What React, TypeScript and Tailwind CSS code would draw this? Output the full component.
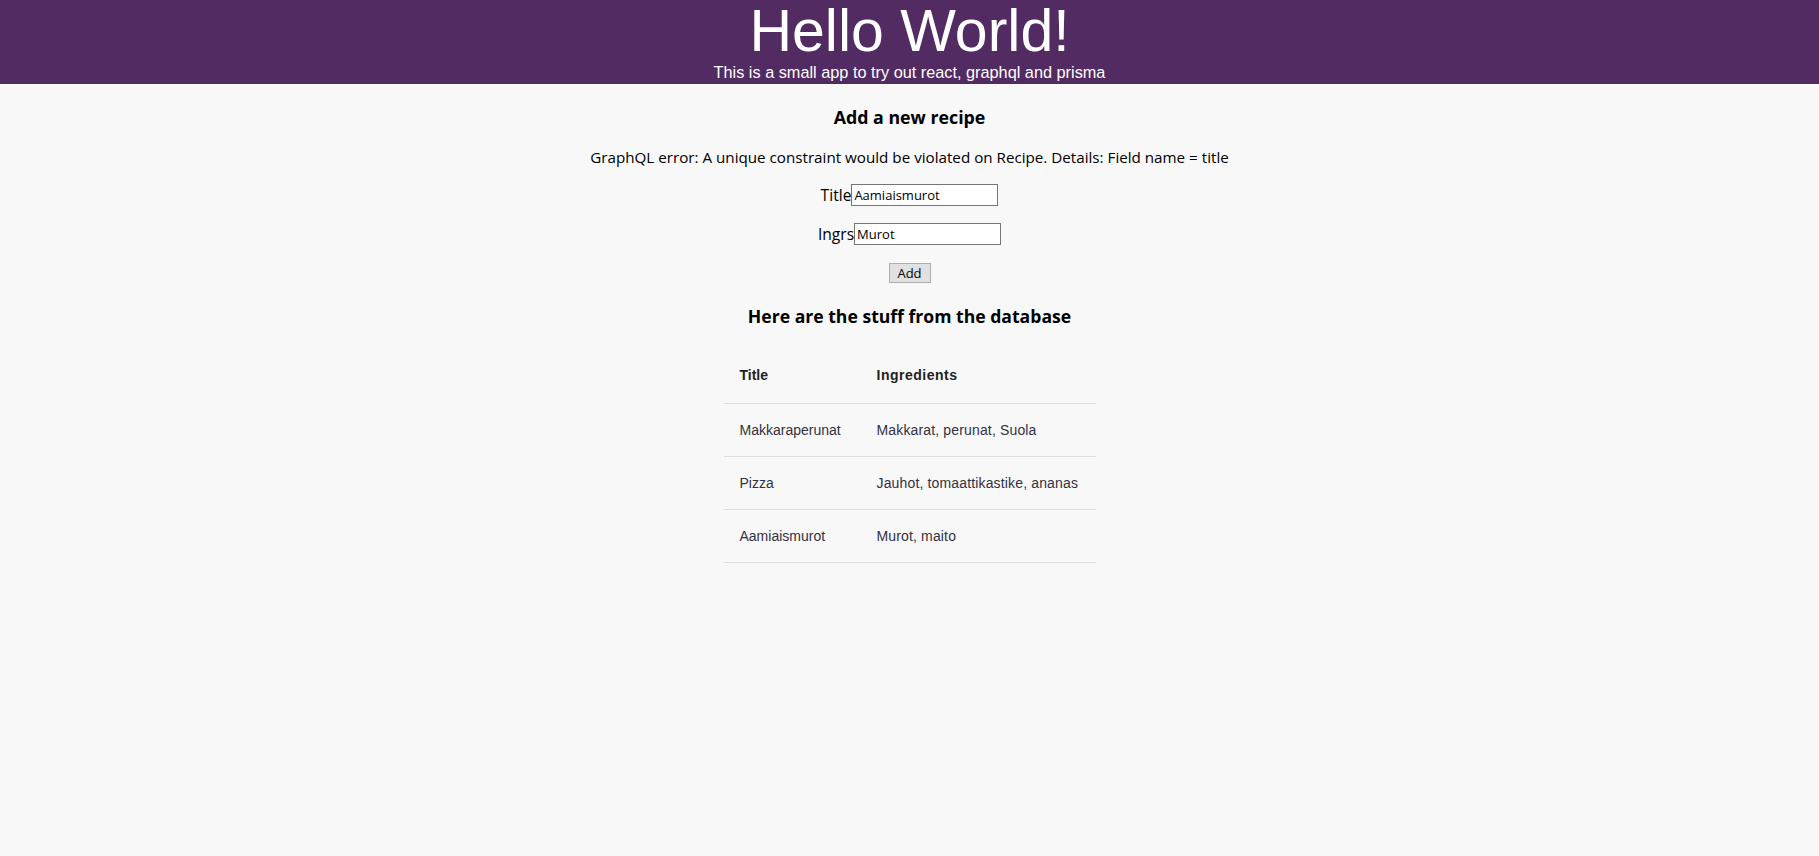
import React from "react";

type Recipe = {
  id: number;
  title: string;
  ingredients: string;
};

const recipes: Recipe[] = [
  { id: 1, title: "Makkaraperunat", ingredients: "Makkarat, perunat, Suola" },
  { id: 2, title: "Pizza", ingredients: "Jauhot, tomaattikastike, ananas" },
  { id: 3, title: "Aamiaismurot", ingredients: "Murot, maito" },
];

const bodyFont = "font-['Open_Sans',sans-serif]";

function Header() {
  return (
    <div className="flex h-[84px] flex-col items-center bg-[#512b61] font-['Liberation_Sans',Arial,sans-serif] text-white">
      <h1 className="mt-[2px] text-[59px] leading-[58px] font-normal">
        Hello World!
      </h1>
      <p className="mt-[3px] text-[16.3px] leading-[18px]">
        This is a small app to try out react, graphql and prisma
      </p>
    </div>
  );
}

function RecipeForm() {
  return (
    <div className={`flex flex-col items-center text-black ${bodyFont}`}>
      <h3 className="mt-[22px] text-[17.8px] leading-[22px] font-bold">
        Add a new recipe
      </h3>
      <p className="mt-[19px] text-[15.2px] leading-[20px]">
        GraphQL error: A unique constraint would be violated on Recipe. Details:
        Field name = title
      </p>
      <div className="mt-[17px] flex items-center">
        <label className="text-[15.6px] leading-[22px]">Title</label>
        <input
          defaultValue="Aamiaismurot"
          className="h-[22px] w-[147px] border border-[#767676] bg-white px-[2px] text-[13px] outline-none"
        />
      </div>
      <div className="mt-[17px] flex items-center">
        <label className="text-[15.6px] leading-[22px]">Ingrs</label>
        <input
          defaultValue="Murot"
          className="h-[22px] w-[147px] border border-[#767676] bg-white px-[2px] text-[13px] outline-none"
        />
      </div>
      <button
        type="button"
        className="mt-[18px] h-[20px] w-[42px] border border-[#adadad] bg-[#e1e1e1] text-[13px] leading-[18px]"
      >
        Add
      </button>
      <h3 className="mt-[22px] text-[17.6px] leading-[22px] font-bold">
        Here are the stuff from the database
      </h3>
    </div>
  );
}

function RecipeTable() {
  return (
    <table className="mx-auto mt-[24px] w-[372px] table-fixed border-collapse font-['Liberation_Sans',Arial,sans-serif] text-[14px] leading-[16px]">
      <thead>
        <tr className="border-b border-[#dedede]">
          <th className="w-[137px] px-4 pt-[16px] pb-[20px] text-left font-bold text-[#222]">
            Title
          </th>
          <th className="px-4 pt-[16px] pb-[20px] text-left font-bold tracking-[0.5px] text-[#222]">
            Ingredients
          </th>
        </tr>
      </thead>
      <tbody>
        {recipes.map((r) => (
          <tr key={r.id} className="border-b border-[#dedede]">
            <td className="px-4 py-[18px] whitespace-nowrap text-[#33323f]">
              {r.title}
            </td>
            <td className="px-4 py-[18px] whitespace-nowrap tracking-[0.15px] text-[#33323f]">
              {r.ingredients}
            </td>
          </tr>
        ))}
      </tbody>
    </table>
  );
}

export default function App() {
  return (
    <div className="min-h-[856px] bg-[#f8f8f8]">
      <Header />
      <RecipeForm />
      <RecipeTable />
    </div>
  );
}
